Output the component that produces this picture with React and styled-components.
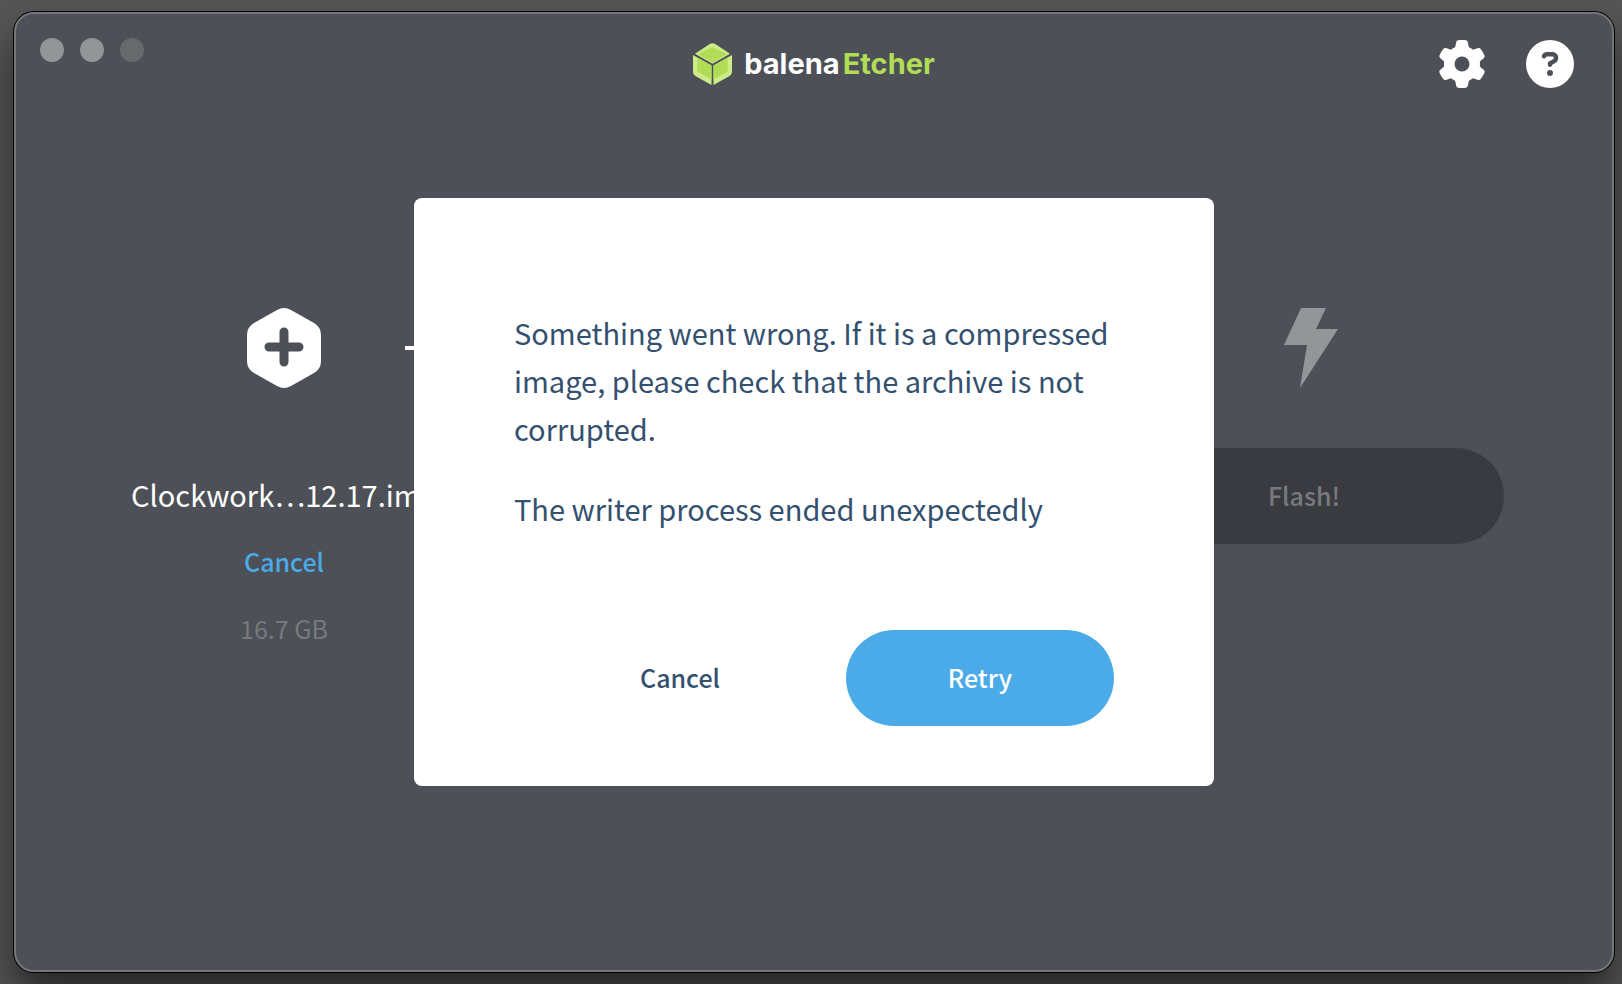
import React from "react";
import styled, { createGlobalStyle } from "styled-components";
import { FaGear, FaCircleQuestion } from "react-icons/fa6";

const App = () => {
  return (
    <Desktop>
      <GlobalStyle />
      <Window>
        <Header>
          <TrafficLights>
            <Light aria-label="Close" />
            <Light aria-label="Minimize" />
            <Light aria-label="Zoom" disabled />
          </TrafficLights>
          <Brand href="#">
            <Cube />
            <span>
              balena<em>Etcher</em>
            </span>
          </Brand>
          <Actions>
            <IconButton aria-label="Settings">
              <FaGear />
            </IconButton>
            <IconButton aria-label="Help">
              <FaCircleQuestion />
            </IconButton>
          </Actions>
        </Header>

        <Steps>
          <Source>
            <PlusIcon />
            <FileName>Clockwork…12.17.img</FileName>
            <LinkButton>Cancel</LinkButton>
            <Size>16.7 GB</Size>
          </Source>
          <Connector />
          <Flash>
            <BoltIcon />
            <FlashButton disabled>Flash!</FlashButton>
          </Flash>
        </Steps>

        <Overlay>
          <Modal role="dialog" aria-modal="true" aria-label="Flash error">
            <p>
              Something went wrong. If it is a compressed image, please check
              that the archive is not corrupted.
            </p>
            <p>The writer process ended unexpectedly</p>
            <ModalFooter>
              <ModalButton>Cancel</ModalButton>
              <ModalButton $primary>Retry</ModalButton>
            </ModalFooter>
          </Modal>
        </Overlay>
      </Window>
    </Desktop>
  );
};

const Cube = () => (
  <svg width="39" height="42" viewBox="0 0 116 125" aria-hidden="true">
    <g fill="#cdec88">
      <path d="M6 32 L50 3 Q58 -1 66 3 L110 32 L58 62 Z" />
      <path d="M0 36 L55 67 V125 L7 98 Q0 94 0 86 Z" />
      <path d="M116 36 L61 67 V125 L109 98 Q116 94 116 86 Z" />
    </g>
    <g fill="#b1dc55">
      <path d="M15 33 L58 12 L101 33 L58 59 Z" />
      <path d="M13 43 L55 67 V109 L13 85 Z" />
      <path d="M103 43 L61 67 V109 L103 85 Z" />
    </g>
  </svg>
);

const PlusIcon = () => (
  <svg width="74" height="80" viewBox="0 0 74 80" aria-hidden="true">
    <path
      fill="#fff"
      d="M30 2 Q37 -2 44 2 L67 15 Q74 19 74 27 V53 Q74 61 67 65 L44 78 Q37 82 30 78 L7 65 Q0 61 0 53 V27 Q0 19 7 15 Z"
    />
    <path
      d="M37 24 V54 M22 39 H52"
      stroke="#4d5057"
      strokeWidth="9"
      strokeLinecap="round"
    />
  </svg>
);

const BoltIcon = () => (
  <svg width="68" height="80" viewBox="-14 0 68 80" aria-hidden="true">
    <path fill="#949598" d="M17 0 H42 L32 21 H54 L16 80 L23 37 H0 Z" />
  </svg>
);

const GlobalStyle = createGlobalStyle`
  * {
    box-sizing: border-box;
  }
  body {
    margin: 0;
    font-family: "Source Sans Pro", "Noto Sans CJK SC", sans-serif;
  }
  p {
    margin: 0;
  }
  button {
    padding: 0;
    border: 0;
    background: none;
    font-family: inherit;
  }
`;

const Desktop = styled.div`
  display: flex;
  min-height: 100vh;
  padding: 12px 8px 12px 14px;
  background: #555;
  overflow: hidden;
`;

const Window = styled.div`
  position: relative;
  flex: 1;
  display: flex;
  flex-direction: column;
  border: 2px solid #74767a;
  border-radius: 20px;
  background: #4d5057;
  box-shadow: 0 0 0 1px #000, 0 24px 40px rgba(0, 0, 0, 0.55);
`;

const Header = styled.header`
  display: grid;
  grid-template-columns: 1fr auto 1fr;
  align-items: center;
  height: 100px;
  padding: 0 38px 0 24px;
`;

const TrafficLights = styled.div`
  display: flex;
  gap: 16px;
  padding-bottom: 28px;
`;

const Light = styled.button`
  width: 24px;
  height: 24px;
  border-radius: 50%;
  background: #949598;
  &:disabled {
    background: #68696d;
  }
`;

/* the side columns have different padding, so nudge back to the centre */
const Brand = styled.a`
  display: flex;
  align-items: center;
  gap: 12px;
  margin-left: 14px;
  color: #fff;
  font-family: Inter, sans-serif;
  font-size: 29px;
  font-weight: 700;
  line-height: 40px;
  text-decoration: none;
  em {
    margin-left: 3px;
    color: #b1dc55;
    font-style: normal;
  }
`;

const Actions = styled.div`
  display: flex;
  justify-content: flex-end;
  gap: 40px;
`;

const IconButton = styled.button`
  display: flex;
  color: #fff;
  font-size: 48px;
`;

const Steps = styled.main`
  display: flex;
  align-items: flex-start;
  padding: 194px 108px 0 147px;
`;

const Step = styled.section`
  display: flex;
  flex-direction: column;
  align-items: center;
  flex-shrink: 0;
`;

const Source = styled(Step)`
  width: 242px;
`;

const Flash = styled(Step)`
  width: 400px;
`;

const Connector = styled.div`
  flex: 1;
  height: 4px;
  margin-top: 38px;
  background: #fff;
`;

const FileName = styled.div`
  margin-top: 82px;
  color: #fff;
  font-size: 29px;
  line-height: 48px;
  white-space: nowrap;
`;

const LinkButton = styled.button`
  margin-top: 19px;
  color: #4aabe8;
  font-size: 25px;
  font-weight: 500;
  line-height: 48px;
`;

const Size = styled.div`
  margin-top: 19px;
  color: #77797d;
  font-size: 25px;
  line-height: 48px;
`;

const PillButton = styled.button`
  height: 96px;
  padding-bottom: 2px;
  border-radius: 48px;
  font-size: 25px;
  font-weight: 500;
`;

const FlashButton = styled(PillButton)`
  width: 100%;
  margin-top: 60px;
  background: #3a3b40;
  color: #777a7e;
`;

const Overlay = styled.div`
  position: absolute;
  inset: 0;
  display: flex;
  align-items: center;
  justify-content: center;
`;

const Modal = styled.div`
  width: 800px;
  max-width: 100%;
  padding: 110px 100px 60px;
  border-radius: 8px;
  background: #fff;
  color: #34506f;
  font-size: 29px;
  line-height: 48px;
  p + p {
    margin-top: 32px;
  }
`;

const ModalFooter = styled.div`
  display: flex;
  justify-content: flex-end;
  gap: 32px;
  margin-top: 98px;
`;

const ModalButton = styled(PillButton)`
  width: 268px;
  background: ${(props) => (props.$primary ? "#4aabe8" : "transparent")};
  color: ${(props) => (props.$primary ? "#fff" : "#34506f")};
`;

export default App;
